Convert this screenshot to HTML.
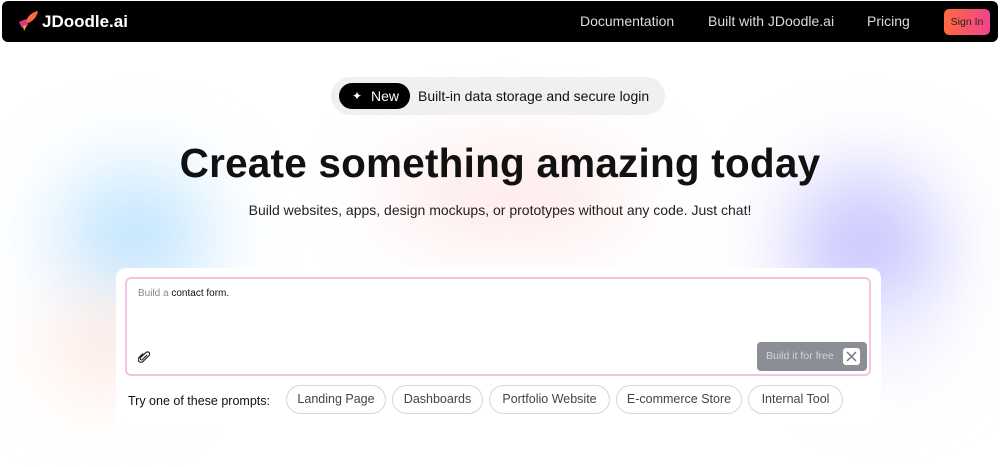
<!DOCTYPE html>
<html><head><style>
*{box-sizing:border-box;margin:0;padding:0}
body{width:1000px;height:467px;overflow:hidden;background:#fff;font-family:"Liberation Sans",sans-serif;position:relative}
.blob{position:absolute;border-radius:50%;filter:blur(40px)}
nav{position:absolute;left:2px;top:1px;width:996px;height:41px;background:#000;border-radius:6px;color:#fff}
nav .logo{position:absolute;left:40px;top:11px;font-weight:bold;font-size:17px}
nav a{position:absolute;top:12px;font-size:14px;color:#ddd}
.signin{position:absolute;left:942px;top:8px;width:46px;height:26px;border-radius:5px;background:linear-gradient(90deg,#ff6a3d,#f0448f);color:#222;font-size:10.5px;line-height:26px;text-align:center}
.pill{position:absolute;left:331px;top:77px;width:334px;height:38px;border-radius:19px;background:#f0f0f0}
.new{position:absolute;left:8px;top:6px;width:71px;height:26px;border-radius:13px;background:#000;color:#fff;font-size:14px;line-height:26px;padding-left:32px}
.pill span.t{position:absolute;left:87px;top:11px;font-size:14px;color:#111}
h1{position:absolute;left:0;width:1000px;top:140px;text-align:center;font-size:40.5px;font-weight:bold;color:#111;letter-spacing:0.2px}
p.sub{position:absolute;left:0;width:1000px;top:202px;text-align:center;font-size:14px;color:#222}
.card{position:absolute;left:116px;top:268px;width:765px;height:157px;background:#fff;border-radius:10px}
.ta{position:absolute;left:125px;top:277px;width:746px;height:99px;border:2px solid #f8c3e3;border-radius:6px;background:#fff}
.ta .ph{position:absolute;left:11px;top:9px;font-size:10px;color:#888}
.ta .ph b{font-weight:normal;color:#111}
.build{position:absolute;left:630px;top:63px;width:110px;height:29px;border-radius:4px;background:#8b8e94;color:#d4d6da;font-size:10.5px;line-height:29px;padding-left:9px}
.build i{position:absolute;right:7px;top:6px;width:17px;height:17px;background:#fff;border-radius:3px}
.try{position:absolute;left:128px;top:394px;font-size:12.5px;color:#111}
.chip{position:absolute;top:385px;height:29px;border:1.5px solid #d6d6dc;border-radius:15px;font-size:12.5px;color:#444;line-height:26px;text-align:center}
</style></head><body>
<div class="blob" style="left:60px;top:170px;width:150px;height:130px;background:#bfe4ff"></div>
<div class="blob" style="left:60px;top:300px;width:90px;height:90px;background:#ffe1d6"></div>
<div class="blob" style="left:380px;top:150px;width:260px;height:90px;background:#ffe2e2;opacity:.8"></div>
<div class="blob" style="left:790px;top:170px;width:150px;height:150px;background:#c8c6ff"></div>
<div class="blob" style="left:850px;top:310px;width:80px;height:60px;background:#ecebff"></div>
<nav>
<svg style="position:absolute;left:15px;top:9px" width="22" height="22" viewBox="0 0 22 22"><path d="M8 14 C10 6 15 2 21 1 C20 7 16 12 8 14Z" fill="#ff6a3d"/><path d="M2 12 L9 9 L11 15 L5 18Z" fill="#e0338a"/><path d="M6 16 L10 15 L7 21Z" fill="#f5b800"/></svg>
<span class="logo">JDoodle.ai</span>
<a style="left:578px">Documentation</a>
<a style="left:706px">Built with JDoodle.ai</a>
<a style="left:865px">Pricing</a>
<div class="signin">Sign In</div>
</nav>
<div class="pill"><div class="new"><span style="position:absolute;left:13px;top:0;font-size:12px">✦</span>New</div><span class="t">Built-in data storage and secure login</span></div>
<h1>Create something amazing today</h1>
<p class="sub">Build websites, apps, design mockups, or prototypes without any code. Just chat!</p>
<div class="card"></div>
<div class="ta"><div class="ph">Build a <b>contact form.</b></div>
<svg style="position:absolute;left:11px;top:72px" width="12" height="12" viewBox="0 0 12 12"><path d="M9 4 L4.5 8.5 a1.3 1.3 0 0 1-2-2 L8 1.5 a2 2 0 0 1 3 3 L5 10.5 a2.8 2.8 0 0 1-4-4 L5 2.5" fill="none" stroke="#222" stroke-width="1.2"/></svg>
<div class="build">Build it for free<i><svg width="17" height="17" viewBox="0 0 17 17"><path d="M4 4 L13 13 M13 4 L4 13" stroke="#777" stroke-width="1.5"/></svg></i></div></div>
<div class="try">Try one of these prompts:</div>
<div class="chip" style="left:286px;width:100px">Landing Page</div>
<div class="chip" style="left:392px;width:91px">Dashboards</div>
<div class="chip" style="left:489px;width:121px">Portfolio Website</div>
<div class="chip" style="left:616px;width:126px">E-commerce Store</div>
<div class="chip" style="left:748px;width:95px">Internal Tool</div>
</body></html>
